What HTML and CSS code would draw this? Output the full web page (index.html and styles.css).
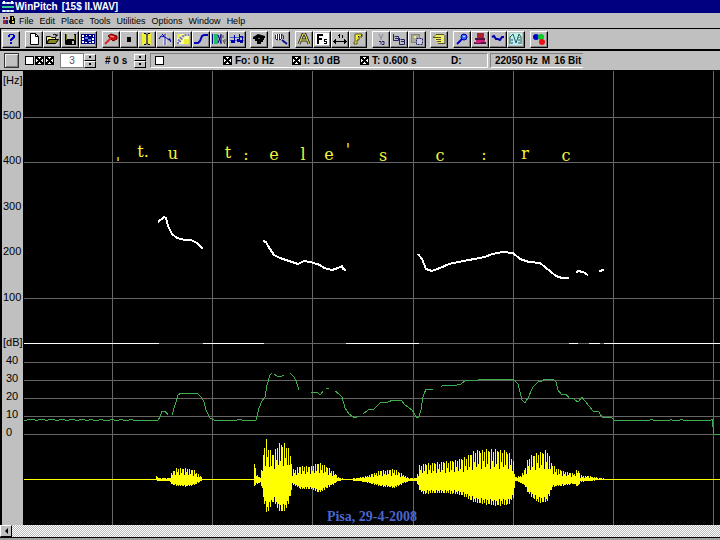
FILE: index.html
```html
<!DOCTYPE html>
<html lang="en">
<head>
<meta charset="utf-8">
<title>WinPitch</title>
<link rel="stylesheet" href="styles.css">
</head>
<body>
<header class="titlebar">
  <svg class="logo" viewBox="0 0 12 12" aria-hidden="true"><path fill="#9cf" d="M0 1h12v2H0zM0 9h12v2H0z"/><path fill="#fff" d="M1 0h2v3H1zM5 1h2v2H5zM9 0h2v3H9zM1 9h2v2H1zM5 9h2v2H5zM9 9h2v2H9z"/><path fill="#3c9" d="M0 5h12v2H0z"/></svg>
  <span>WinPitch</span><span>[15$ II.WAV]</span>
</header>
<nav class="menubar">
  <svg class="doc" viewBox="0 0 12 9" aria-hidden="true"><path fill="#228" d="M0 1h2v2H0zM3 4h2v4H3z"/><path fill="#a22" d="M0 4h3v4H0zM3 1h2v2H3z"/><path d="M7 0h4v2h1v6H7zM6 4h2v3H6z"/><path fill="#dd4" d="M9 1h1v3H9zM9 5h2v2H9z"/></svg>
  <a href="#">File</a><a href="#">Edit</a><a href="#">Place</a><a href="#">Tools</a><a href="#">Utilities</a><a href="#">Options</a><a href="#">Window</a><a href="#">Help</a>
</nav>
<div class="toolbar">
  <div class="group">
    <button aria-label="Help"><svg viewBox="0 0 14 12"><path fill="#00c" d="M4 2h1V1h5v1h1v3h-1v1H9v1H8v1H6V6h1V5h1V4h1V2H6v2H4zM6 9h2v2H6z"/></svg></button>
  </div>
  <div class="group">
    <button aria-label="New"><svg viewBox="0 0 14 12"><path fill="#fff" stroke="#000" d="M3.500 .5h5l3 3v8h-8z"/><path fill="none" stroke="#000" d="M8.500 .5v3h3"/></svg></button>
    <button aria-label="Open"><svg viewBox="0 0 14 12"><path fill="#ee8" stroke="#000" d="M1.500 10.500v-7h4l1 1h4v2h-7z"/><path fill="#882" stroke="#000" d="M1.500 10.500l3-4h9l-3 4z"/><path fill="none" stroke="#000" d="M8 2l2-1 2 2m0-2v2h-2"/></svg></button>
    <button aria-label="Save"><svg viewBox="0 0 14 12"><path d="M2 1h11v11H3l-1-1z"/><path fill="#c0c0c0" d="M4 1h7v5H4zM9 8h2v3H9z"/><path fill="#772" d="M3 1h1v6H3zM11 2h1v5h-1z"/></svg></button>
    <button aria-label="Film"><svg viewBox="0 0 14 12"><path fill="#008" d="M0 1h14v10H0z"/><path fill="#fff" d="M1 2h2v2H1zM5 2h1v1H5zM8 2h2v1H8zM12 2h1v2h-1zM1 5h2v2H1zM1 8h2v2H1zM11 5h2v2h-2zM11 8h2v2h-2zM4 9h2v1H4zM8 9h2v1H8z"/><path fill="#48d" d="M4 4h3v2H4zM7 6h3v2H7z"/></svg></button>
  </div>
  <div class="group tight">
    <button aria-label="Pin"><svg viewBox="0 0 14 12"><path fill="#c11" stroke="#700" d="M4 3l3-2 6 2v3L9 8 7 6z"/><path fill="none" stroke="#d22" stroke-width="2" d="M7 5L1 11"/><path stroke="#faa" d="M6 3l4 1"/></svg></button>
    <button aria-label="Stop"><svg viewBox="0 0 14 12"><path d="M5 4h4v5H5z"/></svg></button>
    <button aria-label="Cursor"><svg viewBox="0 0 14 12"><path fill="#ee3" d="M2 0h4v12H2zM8 0h3v12H8z"/><path fill="none" stroke="#000" d="M4 .5h2l1 1 1-1h2M4 11.500h2l1-1 1 1h2M7 1v10"/></svg></button>
    <button aria-label="Split"><svg viewBox="0 0 14 12"><path fill="none" stroke="#fff" stroke-width="3" d="M7 2v10"/><path fill="none" stroke="#00a" d="M7 1v11M1 6l2-3 4 1 4 3h2M4 1l2 2M11 5l2 4"/></svg></button>
    <button aria-label="Select curve"><svg viewBox="0 0 14 12"><path fill="#ffa" d="M1 1h12v10H1z"/><path fill="#ee3" d="M8 6h5v5H8zM1 1h3v4H1z"/><path fill="none" stroke="#77b" stroke-width="2" stroke-dasharray="2 1" d="M1 10h2l5-8h5M2 8l4-5"/></svg></button>
    <button aria-label="Curve"><svg viewBox="0 0 14 12"><path fill="none" stroke="#00b" stroke-width="2" d="M0 10h4l2-2 2-5 2-1h4"/></svg></button>
    <button aria-label="Sound"><svg viewBox="0 0 14 12"><path fill="#2b6" d="M2 1h4v10H2z"/><path fill="none" stroke="#008" d="M.500 1v10M6 2l3 8M9 1v10M6 10l3-8"/><path fill="none" stroke="#444" d="M11 2v3M11 7l2 4M13 6v3"/></svg></button>
    <button aria-label="Notes"><svg viewBox="0 0 14 12"><path fill="none" stroke="#46c" d="M0 4.500h14M0 7.500h14"/><path fill="#00a" d="M4 2h1v8H1V7h3zM9 1h1v2h3v7h-3V7h2V4h-2v5H7V6h2z"/></svg></button>
  </div>
  <div class="group tight">
    <button aria-label="Tutor"><svg viewBox="0 0 14 12"><path d="M1 4l5-3 7 2v2h-1v2h-1v2H9v2H5V8H3V6H1z"/><path fill="#777" d="M6 5h2v1H6z"/></svg></button>
  </div>
  <div class="group">
    <button aria-label="Zoom"><svg viewBox="0 0 14 12"><path fill="#fff" d="M2 1h6v6H2z"/><path fill="none" stroke="#226" d="M1.500 2v4l2 1V1M5.500 1v6l2-1V1l2 2v3"/><path fill="none" stroke="#118" stroke-width="2" d="M8 7l5 4"/></svg></button>
  </div>
  <div class="group">
    <button aria-label="Font"><svg viewBox="0 0 14 12"><path fill="none" stroke="#333" stroke-width="3" d="M2 11L6 1h2l4 10M4 7h6"/><path fill="none" stroke="#ee4" d="M2 11L6 1h2l4 10M4 7h6"/></svg></button>
    <button aria-label="Frequency"><svg viewBox="0 0 14 12"><path fill="#fff" d="M0 0h14v12H0z"/><path d="M2 1h6v2H4v2h3v2H4v4H2zM9 6h3v1h-2v1h2v3H9v-1h2V9H9z"/></svg></button>
    <button aria-label="Duration"><svg viewBox="0 0 14 12"><path d="M0 8h14v1H0zM1 7h1v3H1zM2 6h1v5H2zM12 7h1v3h-1zM11 6h1v5h-1zM5 2h1v1H5zM6 1h1v4H6zM9 2h1v3H9z"/></svg></button>
    <button aria-label="Flag"><svg viewBox="0 0 14 12"><path fill="#ee3" stroke="#552" d="M4 1h7v3H8v3H6v4H3V9h1z"/><path d="M7 3h1v1H7zM10 2h1v1h-1z"/></svg></button>
  </div>
  <div class="group tight">
    <button aria-label="Cut"><svg viewBox="0 0 14 12"><path fill="none" stroke="#889" d="M5 1l2 4 2-4M7 4v3"/><path fill="none" stroke="#226" d="M5 8.500h2v3M8 8.500h2v3H8"/></svg></button>
    <button aria-label="Copy"><svg viewBox="0 0 14 12"><path fill="none" stroke="#226" d="M1.500 1v6.500h5v-4h-4M3 5.500h3M7.500 5v6.500h5v-5h-4M9 8.500h3"/></svg></button>
    <button aria-label="Paste"><svg viewBox="0 0 14 12"><path fill="#aa9" stroke="#555" stroke-dasharray="1 1" d="M1.500 1.500h8v8h-8z"/><path fill="#ccd" stroke="#226" stroke-dasharray="2 1" d="M6.500 5.500h6v6h-6z"/><path fill="#ee8" d="M4 3h2v2H4z"/></svg></button>
  </div>
  <div class="group">
    <button aria-label="Undo"><svg viewBox="0 0 14 12"><path fill="#ee6" d="M1 4l3-3h8v10H6V8H4z"/><path fill="none" stroke="#552" d="M12 1.500H4l-3 3h8M4 6.500h5M5 8.500h4M6 10.500h7V2"/></svg></button>
  </div>
  <div class="group">
    <button aria-label="Find"><svg viewBox="0 0 14 12"><circle cx="9" cy="4" r="3" fill="#36f" stroke="#00a"/><path stroke="#00c" stroke-width="2" d="M7 6l-5 5"/><path fill="#cef" d="M8 3h2v1H8z"/></svg></button>
    <button aria-label="Print"><svg viewBox="0 0 14 12"><path fill="#a23" d="M4 0h7v5H4z"/><path fill="#514" d="M2 5h10v2H2zM1 9h12v2H1z"/><path fill="#c27" d="M3 7h9v2H3zM2 9h6v1H2z"/></svg></button>
    <button aria-label="Wave"><svg viewBox="0 0 14 12"><path fill="none" stroke="#00a" stroke-width="2" d="M1 4l2-1 2 3h2l2 1 2-3h2"/></svg></button>
    <button aria-label="Spectrum"><svg viewBox="0 0 14 12"><path fill="#bee" d="M1 0h12v12H1z"/><path fill="none" stroke="#264" d="M1 11V4l3-3 3 9 3-9 2 3v7"/><path fill="none" stroke="#24a" stroke-dasharray="2 1" d="M3 11V5M10 11V4"/></svg></button>
  </div>
  <div class="group">
    <button aria-label="Colors"><svg viewBox="0 0 14 12"><circle cx="4" cy="4" r="3" fill="#00c"/><circle cx="9" cy="4" r="3" fill="#0c2"/><circle cx="10" cy="9" r="3" fill="#e11"/></svg></button>
  </div>
</div>
<div class="settings">
  <button class="blank" aria-label="Mode"></button>
  <div class="checks"><input type="checkbox" aria-label="Channel 1"><input type="checkbox" checked aria-label="Channel 2"><input type="checkbox" checked class="bold" aria-label="Channel 3"></div>
  <input class="number" type="text" value="3" aria-label="Count">
  <div class="spinner"><button aria-label="Increase count"></button><button class="down" aria-label="Decrease count"></button></div>
  <output class="time"># 0 s</output>
  <div class="spinner"><button aria-label="Increase time"></button><button class="down" aria-label="Decrease time"></button></div>
  <div class="panel readings">
    <input type="checkbox" aria-label="Lock">
    <label><input type="checkbox" checked>Fo: 0 Hz</label>
    <label><input type="checkbox" checked>I: 10 dB</label>
    <label><input type="checkbox" checked class="bold">T: 0.600 s</label>
    <span>D:</span>
  </div>
  <div class="panel format"><span>22050 Hz</span><span>M</span><span>16 Bit</span></div>
</div>
<main>
<svg class="plot" viewBox="0 70 720 455" role="img" aria-label="Pitch, intensity and waveform">
  <path fill="#c0c0c0" d="M2 71h21v454H2z"/>
  <g class="grid">
    <path d="M112.500 71v454M212.500 71v454M312.500 71v454M413.500 71v454M513.500 71v454M613.500 71v454M713.500 71v454"/>
    <path d="M24 117.500h696M24 162.500h696M24 298.500h696M24 343.500h696M24 362.500h696M24 380.500h696M24 398.500h696M24 416.500h696M24 434.500h696"/>
  </g>
  <g class="axis">
    <text x="3" y="84">[Hz]</text><text x="3" y="119">500</text><text x="3" y="164">400</text><text x="3" y="210">300</text><text x="3" y="255">200</text><text x="3" y="301">100</text>
    <text x="3" y="346">[dB]</text><text x="6" y="364">40</text><text x="6" y="382">30</text><text x="6" y="400">20</text><text x="6" y="418">10</text><text x="6" y="436">0</text>
  </g>
  <path class="base" d="M24 343.500h135M203 343.500h61M346 343.500h73M569 343.500h9M589 343.500h11M604 343.500h116"/>
  <path class="pitch" d="M158 222L164 217 166 218 168 226 172 234 177 238 185 240 191 240 197 243 203 249M263 241L266 242 268 246 274 255 280 258 286 260 298 264 304 261 310 262 320 265 324 268 332 270 338 268 342 266 343 269 346 270M418 254L422 259 426 269 432 271 440 268 449 264 458 262 485 257 492 254 503 252 513 253 520 259 529 262 540 263 545 267 551 272 556 276 562 278 569 278M576 273L578 271 583 272 588 275M599 271L604 270"/>
  <path class="level" d="M24 420H27L29 419H33L35 420H38L40 419H43L45 420H48L50 419H53L55 420H59L60 419H63L65 420H69L71 419H73L75 420H79L81 419H83L85 420H89L91 419L93 420H99L101 419L103 420H110L112 419L114 420H119L121 419L123 420H129L131 419L133 420H158L160 417 162 411H165L168 415M172 415L176 402 178 395 181 393H197L201 397 204 402 206 410 210 418 214 420H237L240 419 242 420H256L259 408 262 401 265 397 267 385 270 375 272 373M274 374L277 376H282L284 375M290 373L294 377 296 381 299 390M311 392H317L319 394H321L323 391M326 388L329 389M335 391L339 394 342 397 345 408 349 414 355 418 359 416M363 414L368 410 374 409 380 403 388 402 393 400 402 401 405 405 412 410 417 418 419 417 421 410 423 397 426 389H433M441 387L443 385H457L461 384 465 381 478 380 481 379H513L518 384 520 392 522 400 525 403 528 398 533 387 538 382 542 381 545 379H553L556 382 558 390 561 394H566L569 398 574 399 578 402 582 397 585 401 593 411 599 412 602 417 612 418 614 420H650L651 419H652L653 420H670L671 419 672 420H680L682 419 683 420H711L712 419 714 434H720"/>
  <path class="wave" id="wave" d="M24 479h696v1H24z"/>
  <g class="phones">
    <text x="118" y="159">ˌ</text><text x="143" y="157">t.</text><text x="173" y="159">u</text><text x="228" y="158">t</text><text x="246" y="160">:</text><text x="274" y="160">e</text><text x="303" y="160">l</text><text x="329" y="160">e</text><text x="348" y="155">'</text><text x="383" y="161">s</text><text x="440" y="161">c</text><text x="484" y="160">:</text><text x="525" y="159">r</text><text x="566" y="161">c</text>
  </g>
  <text class="caption" x="372" y="521">Pisa, 29-4-2008</text>
</svg>
</main>
<footer class="scroll"><button aria-label="Scroll left"></button></footer>
<script src="wave.js"></script>
</body>
</html>
```
FILE: styles.css
```css
* { box-sizing: border-box; }
body {
  margin: 0;
  min-height: 100vh;
  background: #c0c0c0;
  color: #000;
  font: 10px/12px "Liberation Sans", sans-serif;
}
button { padding: 0; font: inherit; background: #c0c0c0; }
.titlebar {
  display: flex;
  align-items: center;
  gap: 4px;
  height: 13px;
  background: #000080;
  color: #fff;
  font: bold 10px/13px "Liberation Sans", sans-serif;
}
.logo { width: 12px; height: 12px; margin: 0 -3px 0 2px; }
.menubar {
  display: flex;
  align-items: center;
  gap: 6px;
  height: 15px;
  padding-left: 3px;
  font-size: 9px;
}
.menubar a { color: #000; text-decoration: none; }
.doc { width: 12px; height: 9px; margin-right: -2px; }
.toolbar {
  display: flex;
  height: 23px;
  padding: 2px 0 0 1px;
  border: solid #000;
  border-width: 1px 0 2px 1px;
}
.group { display: flex; margin-right: 5px; }
.tight { margin-right: 4px; }
.group button {
  width: 18px;
  height: 17px;
  border: 1px solid #000;
  border-left-color: #fff;
  border-top-color: #fff;
  box-shadow: inset -1px -1px #808080;
}
.group svg { display: block; width: 14px; height: 12px; margin: 0 1px 1px; }
.settings {
  display: flex;
  align-items: center;
  height: 19px;
  padding-left: 4px;
}
.blank {
  width: 15px;
  height: 15px;
  margin-right: 6px;
  border: 1px solid #333;
  box-shadow: inset 1px 1px #eee, inset -1px -1px #808080;
}
.checks { display: flex; gap: 1px; margin-right: 6px; }
input[type="checkbox"] {
  appearance: none;
  flex: none;
  width: 9px;
  height: 9px;
  margin: 0;
  border: 1px solid #000;
  background: #fff;
}
input[type="checkbox"]:checked {
  background:
    linear-gradient(45deg, transparent 42%, #000 42%, #000 58%, transparent 58%),
    linear-gradient(-45deg, transparent 42%, #000 42%, #000 58%, transparent 58%),
    #fff;
}
input.bold:checked {
  background:
    linear-gradient(45deg, transparent 36%, #000 36%, #000 64%, transparent 64%),
    linear-gradient(-45deg, transparent 36%, #000 36%, #000 64%, transparent 64%),
    #fff;
}
.number {
  width: 24px;
  height: 15px;
  padding: 0;
  border: 1px solid #808080;
  background: #fff;
  color: #555;
  font: 10px/12px "Liberation Sans", sans-serif;
  text-align: center;
}
.spinner { display: grid; width: 12px; margin-right: 9px; }
.spinner button {
  height: 7px;
  border: 1px solid #000;
  border-left-color: #fff;
  border-top-color: #fff;
}
.spinner button::before {
  content: "";
  display: block;
  width: 2px;
  height: 2px;
  margin: 1px auto;
  background: #000;
}
.time { width: 29px; font-weight: bold; }
.time + .spinner { margin-right: 4px; }
.panel {
  display: flex;
  align-items: center;
  height: 15px;
  border: 1px solid #fff;
  border-top-color: #808080;
  border-left-color: #808080;
  font-weight: bold;
}
.readings {
  width: 338px;
  padding-left: 4px;
  display: grid;
  grid-template-columns: 68px 69px 68px 91px auto;
  margin-right: 2px;
}
.readings label { display: flex; align-items: center; gap: 3px; }
.format { gap: 4px; padding: 0 2px 0 4px; border-right: 0; }
.plot { display: block; width: 100%; background: #000; }
.grid { fill: none; stroke: #666; shape-rendering: crispEdges; }
.axis { font: 11px "Liberation Sans", sans-serif; }
.base { stroke: #fff; shape-rendering: crispEdges; }
.pitch { fill: none; stroke: #fff; stroke-width: 2; shape-rendering: crispEdges; }
.level { fill: none; stroke: #3fae4c; shape-rendering: crispEdges; }
.wave { fill: #ff0; shape-rendering: crispEdges; }
.phones { fill: #f4f43a; font: 16px "DejaVu Serif", serif; text-anchor: middle; }
.caption { fill: #4a66d0; font: bold 14px "Liberation Serif", serif; text-anchor: middle; }
.scroll {
  height: 15px;
  border-bottom: 2px solid #a0a0a0;
  background: repeating-conic-gradient(#fff 0 25%, #bbb 0 50%) 0 0 / 2px 2px;
  box-shadow: inset 0 -1px #000;
}
.scroll button {
  display: grid;
  place-items: center;
  width: 12px;
  height: 12px;
  border: 1px solid #000;
  border-left-color: #fff;
  border-top-color: #fff;
}
.scroll button::before {
  content: "";
  border: solid transparent;
  border-width: 3px 3px 3px 0;
  border-right-color: #000;
}
```
FILE: wave.js
```js
// Envelope points: x, height above the baseline, depth below it.
const envelope = [
  [24,0,0],[155,0,0],[157,6,1],[158,1,1],[169,1,1],[171,6,4],[176,11,6],[186,11,7],[194,9,5],[199,4,2],[203,0,0],
  [253,0,0],[254,16,6],[257,4,4],[260,2,2],[262,16,10],[264,34,25],[266,40,32],[268,32,32],[272,25,22],
  [275,30,24],[278,36,31],[283,36,32],[287,34,28],[290,24,16],[292,9,4],[300,13,9],[310,13,9],[319,17,13],
  [327,12,8],[334,7,4],[338,2,1],[345,0,0],[358,1,1],[368,4,3],[378,8,6],[394,10,8],[402,5,4],[409,1,1],[416,1,1],
  [419,14,10],[422,15,14],[440,17,13],[455,19,14],[465,22,17],[475,29,23],[495,30,26],[508,28,25],[513,18,18],
  [515,2,1],[520,3,3],[524,9,5],[528,22,14],[538,27,23],[547,29,22],[552,14,7],[562,8,6],[574,6,4],[577,11,7],
  [580,4,2],[588,3,1],[600,1,0],[606,0,0],[720,0,0]
];
const peaks = [1, 0.5, 0.95, 0.9, 0.35, 1, 0.6, 0.9, 0.4];
let d = "";
let k = 0;
for (let x = 24; x < 720; x++) {
  while (envelope[k + 1][0] <= x && k < envelope.length - 2) k++;
  const [x0, u0, l0] = envelope[k];
  const [x1, u1, l1] = envelope[k + 1];
  const t = (x - x0) / (x1 - x0);
  const p = peaks[x % peaks.length];
  const up = Math.round((u0 + (u1 - u0) * t) * p);
  const low = Math.round((l0 + (l1 - l0) * t) * (0.6 + 0.4 * p));
  d += `M${x} ${479 - up}h1v${up + low + 1}h-1z`;
}
document.getElementById("wave").setAttribute("d", d);
```
